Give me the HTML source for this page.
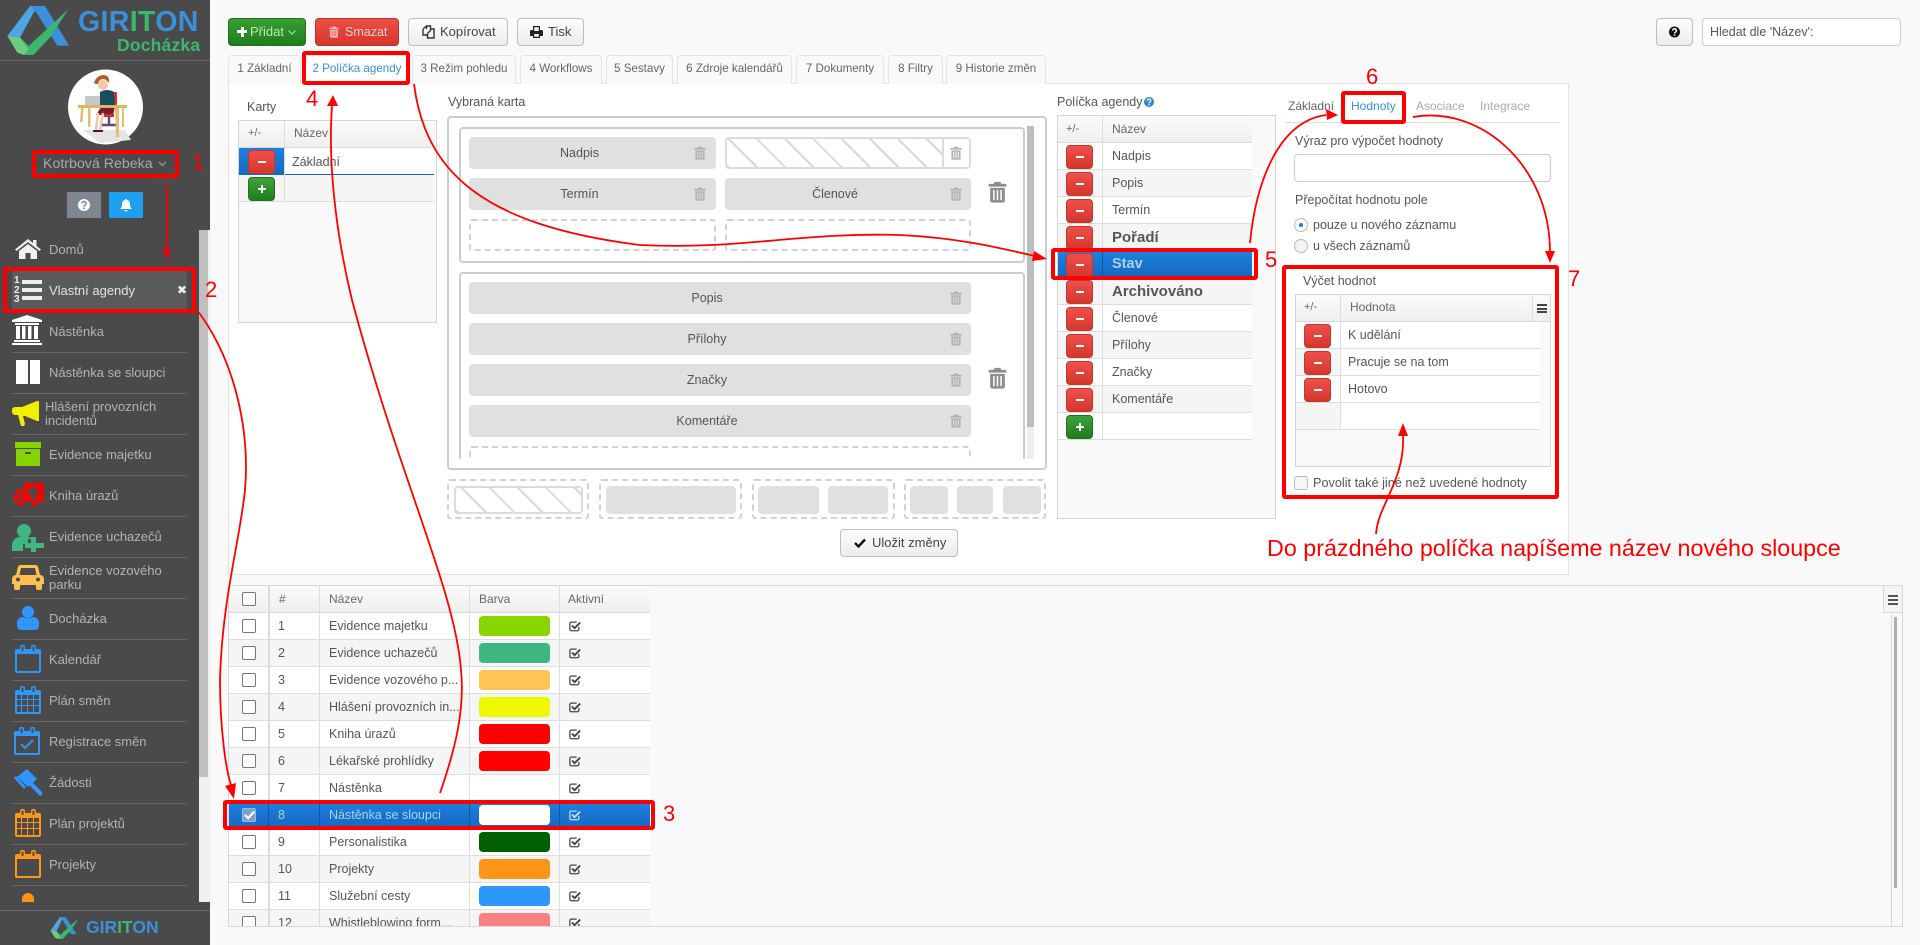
<!DOCTYPE html>
<html lang="cs"><head><meta charset="utf-8"><title>Giriton Docházka</title>
<style>
*{box-sizing:border-box}
html,body{margin:0;padding:0;width:1920px;height:945px;overflow:hidden;background:#f9f9f9;font-family:"Liberation Sans",sans-serif;font-size:12.5px;color:#555}
.a,.t,.btn,.tab,.f,.d,.rm,.pl,.s,.n,.rw{position:absolute}
.t{white-space:nowrap;line-height:16px}
.btn{height:28px;top:18px;border:1px solid #bdbdbd;border-radius:4px;background:linear-gradient(#fdfdfd,#ececec);line-height:26px;font-size:13px;color:#444;white-space:nowrap}
.tab{top:55px;height:29px;border:1px solid #e3e3e3;border-bottom:0;border-radius:4px 4px 0 0;background:#f9f9f9;font-size:11.6px;line-height:26px;text-align:center;color:#666;white-space:nowrap}
.f{background:#e0e0e0;border-radius:4px;text-align:center;line-height:32px;height:32px;color:#555;font-size:12.5px;padding-right:26px}
.d{border:2px dashed #d2d2d2;border-radius:3px}
.rm,.pl{width:27px;height:24px;border-radius:4px}
.rm{background:linear-gradient(#f0504a,#d5362c);border:1px solid #c0392f}
.rm:after{content:"";position:absolute;left:9px;top:10px;width:8px;height:2px;background:#fff}
.pl{background:linear-gradient(#3fa23c,#1f7d1c);border:1px solid #246f22}
.pl:after{content:"";position:absolute;left:9px;top:10px;width:8px;height:2px;background:#fff}
.pl:before{content:"";position:absolute;left:12px;top:7px;width:2px;height:8px;background:#fff}
.hatch{background:repeating-linear-gradient(45deg,#d8d8d8 0 2px,#fff 2px 20px);border:2px solid #dcdcdc;border-radius:4px}
.tr{position:absolute;width:12px;height:14px;fill:#b2b2b2}
.trb{position:absolute;width:19px;height:22px;fill:#8d8d8d}
.head{background:linear-gradient(#fbfbfb,#efefef);border-bottom:1px solid #d9d9d9}
.rw{height:27px;border-bottom:1px solid #ddd;font-size:12.5px;line-height:27px}
.n{color:#b3b3b3;font-size:13px;line-height:14px;white-space:nowrap;left:49px}
.s{left:12px;width:175px;height:1px;background:#666}
.lab{font-size:12.5px;color:#555}
.red{position:absolute;color:#f00;font-size:22px;line-height:24px;z-index:30}
.g{position:absolute;left:0;width:421px;height:27px;border-bottom:1px solid #ddd;line-height:26px;background:#fff;white-space:nowrap}
.g.e{background:#f5f5f5}
.g i{position:absolute;font-style:normal}
.g .cb{left:13px;top:6px;width:14px;height:14px;border:1.5px solid #777;border-radius:2px;background:#fff}
.g .c1{left:49px}
.g .c2{left:100px}
.g .chip{left:250px;top:3px;width:71px;height:20px;border-radius:4px}
.g .ck{left:340px;top:7px;width:12px;height:12px}
.v{position:absolute;top:0;width:1px;background:#ddd}
</style></head><body>
<svg width="0" height="0" style="position:absolute"><defs>
<symbol id="trash" viewBox="0 0 14 16"><path fill-rule="evenodd" d="M5 .5h4l1 1.5h3.5v2H.5V2H4zM1.6 5h10.8v9.3a1.5 1.5 0 0 1-1.5 1.5H3.100a1.500 1.500 0 0 1-1.500-1.500zM3.800 6.500v7.500h1.100V6.500zM6.450 6.500v7.500h1.100V6.500zM9.100 6.500v7.500h1.100V6.500z"/></symbol>
<symbol id="chk" viewBox="0 0 14 14"><path fill="none" stroke="currentColor" stroke-width="1.500" d="M11.500 8v3a1.500 1.500 0 0 1-1.500 1.500H2.500A1.500 1.500 0 0 1 1 11V4a1.500 1.500 0 0 1 1.500-1.500H9"/><path fill="none" stroke="currentColor" stroke-width="2.200" d="M3.500 6.500l3 3L13 3"/></symbol>
<symbol id="cal" viewBox="0 0 26 28"><path fill-rule="evenodd" d="M0 6a2 2 0 0 1 2-2h3V2a2.500 2.500 0 0 1 5 0v2h6V2a2.500 2.500 0 0 1 5 0v2h3a2 2 0 0 1 2 2v20a2 2 0 0 1-2 2H2a2 2 0 0 1-2-2zM2 9v17h22V9zM6.500 1.500V6h2V1.500zM17.500 1.500V6h2V1.500z"/></symbol>
<symbol id="calg" viewBox="0 0 26 28"><path fill-rule="evenodd" d="M0 6a2 2 0 0 1 2-2h3V2a2.500 2.500 0 0 1 5 0v2h6V2a2.500 2.500 0 0 1 5 0v2h3a2 2 0 0 1 2 2v20a2 2 0 0 1-2 2H2a2 2 0 0 1-2-2zM2 9v4h4V9zM7 9v4h5V9zM13 9v4h5V9zM19 9v4h5V9zM2 14v5h4v-5zM7 14v5h5v-5zM13 14v5h5v-5zM19 14v5h5v-5zM2 20v6h4v-6zM7 20v6h5v-6zM13 20v6h5v-6zM19 20v6h5v-6zM6.500 1.500V6h2V1.500zM17.500 1.500V6h2V1.500z"/></symbol>
</defs></svg>

<!-- SIDEBAR -->
<div class="a" style="left:0;top:0;width:210px;height:230px;background:#4a4a4a"></div>
<div class="a" style="left:0;top:230px;width:199px;height:672px;background:#4a4a4a"></div>
<div class="a" style="left:199px;top:230px;width:11px;height:672px;background:#f0f0f0"></div>
<div class="a" style="left:199px;top:230px;width:9px;height:547px;background:#c0c0c0"></div>
<div class="a" style="left:0;top:60px;width:210px;height:1px;background:#666"></div>

<svg class="a" style="left:0;top:0" width="210" height="60" viewBox="0 0 630 180">
<polygon points="22,108 90,18 112,18 60,112" fill="#4fa6e6"/>
<polygon points="90,18 135,18 207,137 172,137 112,42" fill="#3c90da"/>
<polygon points="22,108 60,112 88,150 72,165 52,158" fill="#6ecb7f"/>
<polygon points="60,112 86,138 205,28 150,112 100,165 72,165 86,150" fill="#3cb86e"/>
</svg>
<div class="t" style="left:78px;top:9px;font-size:28.500px;line-height:26px;font-weight:bold;letter-spacing:.35px;color:#3c90da">GIR<span style="color:#3cb86e">IT</span>ON</div>
<div class="t" style="left:117px;top:35px;font-size:17.500px;line-height:20px;font-weight:bold;letter-spacing:.2px;color:#3cb86e">Docházka</div>

<svg class="a" style="left:68px;top:69px" width="76" height="76" viewBox="68 69 76 76">
<circle cx="105.500" cy="107" r="37.500" fill="#fff"/>
<polygon points="83,130 125,130 131,140 100,143" fill="#e4e4e4"/>
<rect x="113" y="92" width="4" height="13" rx="1" fill="#d93030"/>
<path d="M101 107h14l-2 8H96z" fill="#7c1a2c"/>
<path d="M98 113l-2 17M103 113l-3 17" stroke="#f0c8a8" stroke-width="2.500" fill="none"/>
<path d="M93 130h5v2h-5zM98 130h5v2h-5z" fill="#5a1420"/>
<path d="M109 114v11M102 125h14" stroke="#5c4a78" stroke-width="2.500" fill="none"/>
<path d="M104 114h10v3h-10z" fill="#c03038"/>
<path d="M100 92q7-4 14 0l1 14h-15z" fill="#17505a"/>
<rect x="85" y="96" width="15" height="10" rx="1" fill="#c6c8ca"/>
<circle cx="103" cy="85" r="5" fill="#f2c8a8"/>
<path d="M94 83q2-7 9-8q7 0 6 8q-3-4-6-4q-4 0-5 5q-3 0-4-1z" fill="#b85a24"/>
<rect x="78" y="105" width="49" height="3" fill="#dfb565"/>
<path d="M81 108l-1 14h2.500l1-14zM88 108v19h2.500v-19zM115 108l1 29h3v-29zM122 108v19h2v-19z" fill="#e6bf6e"/>
</svg>

<div class="t" style="left:43px;top:156px;font-size:14.200px;color:#a9a9a9">Kotrbová Rebeka</div>
<svg class="a" style="left:158px;top:161px" width="9" height="6" viewBox="0 0 9 6"><path d="M1 1l3.500 3.500L8 1" fill="none" stroke="#8f8f8f" stroke-width="1.500"/></svg>

<div class="a" style="left:67px;top:192px;width:34px;height:26px;background:#7e8791"></div>
<div class="a" style="left:109px;top:192px;width:34px;height:26px;background:#1da1ee"></div>
<svg class="a" style="left:78px;top:199px" width="12" height="12" viewBox="0 0 12 12"><circle cx="6" cy="6" r="6" fill="#fff"/><path d="M4 4.500a2 2 0 1 1 3 1.700c-.8.500-1 .800-1 1.500" fill="none" stroke="#7e8791" stroke-width="1.500"/><rect x="5.200" y="8.500" width="1.600" height="1.600" fill="#7e8791"/></svg>
<svg class="a" style="left:120px;top:199px" width="12" height="13" viewBox="0 0 12 13"><path d="M6 0a1 1 0 0 1 1 1c2 .4 3 2 3 4 0 3 1 4 2 5H0c1-1 2-2 2-5 0-2 1-3.600 3-4a1 1 0 0 1 1-1zM4.500 11h3a1.500 1.500 0 0 1-3 0z" fill="#fff"/></svg>

<!-- menu icons -->
<svg class="a" style="left:15px;top:239px" width="26" height="20" viewBox="0 0 26 20"><path d="M13 0l5 4V1h3.500v6L26 10.500 24.500 12 13 3 1.500 12 0 10.500zM4 12l9-7 9 7v8h-6.500v-6h-5v6H4z" fill="#f0f0f0"/></svg>
<div class="n" style="top:243px">Domů</div>
<div class="a" style="left:12px;top:271px;width:175px;height:40px;background:#5a5a5a"></div>
<div class="t" style="left:14px;top:276px;font-size:10px;line-height:9.500px;font-weight:bold;color:#eee;white-space:normal;width:8px">1<br>2<br>3</div>
<div class="a" style="left:22px;top:280px;width:20px;height:4px;background:#eee"></div>
<div class="a" style="left:22px;top:288px;width:20px;height:4px;background:#eee"></div>
<div class="a" style="left:22px;top:296px;width:20px;height:4px;background:#eee"></div>
<div class="n" style="top:284px;color:#e2e2e2">Vlastní agendy</div>
<div class="t" style="left:177px;top:282px;font-size:12px;color:#eee;font-family:'DejaVu Sans',sans-serif">✖</div>

<svg class="a" style="left:12px;top:315px" width="30" height="30" viewBox="0 0 30 30" fill="#fff"><path d="M15 0l15 5v2H0V5zM3 8h24v2H3zM4 11h4v13H4zM10 11h3.500v13H10zM16 11h3.500v13H16zM22 11h4v13h-4zM2 25h26v2H2zM0 28h30v2H0z"/></svg>
<div class="n" style="top:325px">Nástěnka</div><div class="s" style="top:352px"></div>

<div class="a" style="left:16px;top:360px;width:12px;height:24px;background:#fff"></div>
<div class="a" style="left:30px;top:360px;width:10px;height:24px;background:#fff"></div>
<div class="n" style="top:366px">Nástěnka se sloupci</div><div class="s" style="top:393px"></div>

<svg class="a" style="left:12px;top:401px" width="27" height="25" viewBox="0 0 27 25" fill="#f0f000"><path d="M0 9a3 3 0 0 1 3-3h7L25 0h2v20h-2L13 15l-2 0 2 8-1 2H9L6 14H3a3 3 0 0 1-3-3z"/></svg>
<div class="n" style="top:400px;left:45px">Hlášení provozních<br>incidentů</div><div class="s" style="top:434px"></div>

<div class="a" style="left:15px;top:442px;width:26px;height:6px;background:#86d300"></div>
<div class="a" style="left:16px;top:449px;width:24px;height:17px;background:#86d300"></div>
<div class="a" style="left:25px;top:452px;width:6px;height:1.500px;background:#3c5a00"></div>
<div class="n" style="top:448px">Evidence majetku</div><div class="s" style="top:475px"></div>

<svg class="a" style="left:14px;top:483px" width="30" height="24" viewBox="0 0 30 24" fill="#f00"><path fill-rule="evenodd" d="M10 0h19a1 1 0 0 1 1 1v18h-5a4 4 0 0 0-8 0H10a4 4 0 0 0-8 0H0v-7l4-6h6zM17 3v4h-4v4h4v4h4v-4h4V7h-4V3zM6 8l-3 4h5V8z"/><circle cx="6" cy="20" r="3"/><circle cx="21" cy="20" r="3"/></svg>
<div class="n" style="top:489px">Kniha úrazů</div><div class="s" style="top:516px"></div>

<svg class="a" style="left:12px;top:524px" width="32" height="28" viewBox="0 0 32 28"><circle cx="12" cy="7" r="7" fill="#3eb780"/><path d="M0 27v-6a8 8 0 0 1 8-8h8a8 8 0 0 1 5 2h-5v5h-5v7z" fill="#3eb780"/><path d="M19 13h5v6h8v5h-8v4h-5v-4h-6v-5h6z" fill="#3eb780"/></svg>
<div class="n" style="top:530px">Evidence uchazečů</div><div class="s" style="top:557px"></div>

<svg class="a" style="left:12px;top:565px" width="32" height="25" viewBox="0 0 32 25" fill="#ffc050"><path fill-rule="evenodd" d="M9 0h14a3 3 0 0 1 3 2l2 8a4 4 0 0 1 4 4v5h-2v4a2 2 0 0 1-2 2h-2a2 2 0 0 1-2-2v-3H8v3a2 2 0 0 1-2 2H4a2 2 0 0 1-2-2v-4H0v-5a4 4 0 0 1 4-4l2-8a3 3 0 0 1 3-2zM9 3l-1.500 7h17L23 3zM6 12.500a2 2 0 1 0 .01 0zM26 12.500a2 2 0 1 0 .01 0z"/></svg>
<div class="n" style="top:564px">Evidence vozového<br>parku</div><div class="s" style="top:598px"></div>

<svg class="a" style="left:17px;top:606px" width="22" height="24" viewBox="0 0 22 24" fill="#2f96fb"><circle cx="11" cy="6" r="6"/><path d="M0 20v-3a6 6 0 0 1 6-6q5 3 10 0a6 6 0 0 1 6 6v3a4 4 0 0 1-4 4H4a4 4 0 0 1-4-4z"/></svg>
<div class="n" style="top:612px">Docházka</div><div class="s" style="top:639px"></div>

<svg class="a" style="left:15px;top:645px;fill:#2f96fb" width="26" height="28"><use href="#cal"/></svg>
<div class="n" style="top:653px">Kalendář</div><div class="s" style="top:680px"></div>

<svg class="a" style="left:15px;top:686px;fill:#2f96fb" width="26" height="28"><use href="#calg"/></svg>
<div class="n" style="top:694px">Plán směn</div><div class="s" style="top:721px"></div>

<svg class="a" style="left:14px;top:727px;fill:#2f96fb" width="26" height="28"><use href="#cal"/><path d="M7 17l4 4 8-8" fill="none" stroke="#2f96fb" stroke-width="2"/></svg>
<div class="n" style="top:735px">Registrace směn</div><div class="s" style="top:762px"></div>

<svg class="a" style="left:14px;top:769px" width="28" height="27" viewBox="0 0 28 27" fill="#2f96fb"><path d="M13 0l10 10-9 8L3 8zM0 9l2-2 10 11-2 2zM15 16l3-3 10 10a2 2 0 0 1-3 3z"/></svg>
<div class="n" style="top:776px">Žádosti</div><div class="s" style="top:803px"></div>

<svg class="a" style="left:15px;top:809px;fill:#ff9518" width="26" height="28"><use href="#calg"/></svg>
<div class="n" style="top:817px">Plán projektů</div><div class="s" style="top:844px"></div>

<svg class="a" style="left:15px;top:850px;fill:#ff9518" width="26" height="28"><use href="#cal"/></svg>
<div class="n" style="top:858px">Projekty</div><div class="s" style="top:885px"></div>
<div class="a" style="left:22px;top:893px;width:12px;height:9px;background:#ff9518;border-radius:6px 6px 0 0"></div>

<div class="a" style="left:0;top:902px;width:210px;height:43px;background:#4a4a4a"></div>
<div class="a" style="left:0;top:910px;width:210px;height:1px;background:#666"></div>
<svg class="a" style="left:50px;top:916px" width="30" height="23" viewBox="0 0 190 150">
<polygon points="0,95 62,8 82,8 40,100" fill="#4fa6e6"/>
<polygon points="62,8 100,8 170,118 135,118 82,30" fill="#3c90da"/>
<polygon points="0,95 40,100 65,135 50,150 30,142" fill="#6ecb7f"/>
<polygon points="40,100 65,122 185,15 130,98 80,150 50,150 65,135" fill="#3cb86e"/>
</svg>
<div class="t" style="left:86px;top:918px;font-size:17.500px;line-height:18px;font-weight:bold;color:#3c90da">GIR<span style="color:#3cb86e">IT</span>ON</div>

<!-- TOOLBAR -->
<div class="btn" style="left:228px;width:78px;background:linear-gradient(#36a033,#1f7d1c);border-color:#246f22;color:#bfe6b0;padding-left:21px">Přidat</div>
<div class="a" style="left:237px;top:30px;width:10px;height:3px;background:#fff"></div><div class="a" style="left:240.500px;top:26.500px;width:3px;height:10px;background:#fff"></div>
<svg class="a" style="left:288px;top:30px" width="8" height="5" viewBox="0 0 8 5"><path d="M.5.500L4 4 7.500.5" fill="none" stroke="#a8d8a0" stroke-width="1.200"/></svg>
<div class="btn" style="left:315px;width:84px;background:linear-gradient(#ee4f45,#d5362c);border-color:#b8332b;color:#fbd0c8;padding-left:29px;font-size:12.500px">Smazat</div>
<svg class="a" style="left:329px;top:26px;fill:#fbc5be" width="10" height="12"><use href="#trash"/></svg>
<div class="btn" style="left:408px;width:100px;padding-left:31px">Kopírovat</div>
<svg class="a" style="left:422px;top:25px" width="13" height="14" viewBox="0 0 13 14"><path d="M4.500 4V1h4l0 3H12v9H5.500V8.500M1 4l3.500-3M1 4v6h4.500M5.500 8.500L9 5" fill="none" stroke="#333" stroke-width="1.400"/></svg>
<div class="btn" style="left:517px;width:67px;padding-left:30px">Tisk</div>
<svg class="a" style="left:530px;top:26px" width="13" height="12" viewBox="0 0 13 12" fill="#222"><path fill-rule="evenodd" d="M3 0h7v4h1.500A1.500 1.500 0 0 1 13 5.500V10h-3v2H3v-2H0V5.500A1.500 1.500 0 0 1 1.500 4H3zM4.200 1.200V5h4.600V1.200zM4.200 8v2.800h4.600V8z"/></svg>
<div class="btn" style="left:1656px;width:37px"></div>
<svg class="a" style="left:1669px;top:26px" width="11" height="12" viewBox="0 0 12 12"><circle cx="6" cy="6" r="6" fill="#111"/><path d="M4 4.500a2 2 0 1 1 3 1.700c-.8.500-1 .800-1 1.500" fill="none" stroke="#fff" stroke-width="1.500"/><rect x="5.200" y="8.500" width="1.600" height="1.600" fill="#fff"/></svg>
<div class="a" style="left:1702px;top:18px;width:199px;height:28px;background:#fff;border:1px solid #ccc;border-radius:4px;font-size:12.500px;line-height:26px;padding-left:7px;color:#555">Hledat dle 'Název':</div>

<!-- TABS -->
<div class="a" style="left:228px;top:83px;width:1341px;height:492px;background:#fff;border:1px solid #e3e3e3"></div>
<div class="tab" style="left:228px;width:73px">1 Základní</div>
<div class="tab" style="left:305px;width:104px;background:#fff;color:#3b8ee0">2 Políčka agendy</div>
<div class="tab" style="left:412px;width:104px">3 Režim pohledu</div>
<div class="tab" style="left:520px;width:82px">4 Workflows</div>
<div class="tab" style="left:606px;width:67px">5 Sestavy</div>
<div class="tab" style="left:677px;width:115px">6 Zdroje kalendářů</div>
<div class="tab" style="left:796px;width:88px">7 Dokumenty</div>
<div class="tab" style="left:888px;width:55px">8 Filtry</div>
<div class="tab" style="left:946px;width:100px">9 Historie změn</div>

<!-- KARTY -->
<div class="t lab" style="left:247px;top:99px">Karty</div>
<div class="a" style="left:238px;top:120px;width:199px;height:203px;background:#f9f9f9;border:1px solid #d5d5d5"></div>
<div class="a head" style="left:239px;top:121px;width:195px;height:27px"></div>
<div class="a" style="left:284px;top:121px;width:1px;height:80px;background:#ddd"></div>
<div class="t" style="left:248px;top:125px;font-size:11px;color:#666">+/-</div>
<div class="t" style="left:294px;top:125px;font-size:12px;color:#666">Název</div>
<div class="a" style="left:239px;top:148px;width:45px;height:27px;background:linear-gradient(#1d82e0,#1566bf)"></div>
<div class="a" style="left:285px;top:148px;width:149px;height:27px;background:#fff;border-bottom:1.500px solid #1566bf"></div>
<div class="t" style="left:292px;top:154px">Základní</div>
<div class="rm" style="left:248px;top:150px"></div>
<div class="a" style="left:239px;top:175px;width:195px;height:27px;background:#f5f5f5;border-bottom:1px solid #ddd"></div>
<div class="a" style="left:284px;top:175px;width:1px;height:27px;background:#ddd"></div>
<div class="pl" style="left:248px;top:177px"></div>

<!-- VYBRANA KARTA -->
<div class="t lab" style="left:448px;top:94px">Vybraná karta</div>
<div class="a" style="left:447px;top:116px;width:600px;height:354px;border:2px solid #ccc;border-radius:4px"></div>
<div class="a" style="left:459px;top:127px;width:566px;height:136px;border:2px solid #ccc;border-radius:4px"></div>
<div class="a" style="left:1027px;top:126px;width:7px;height:333px;background:#eee"></div>
<div class="a" style="left:1027px;top:126px;width:7px;height:301px;background:#bdbdbd"></div>
<div class="f" style="left:469px;top:137px;width:247px">Nadpis</div>
<svg class="tr" style="left:694px;top:146px"><use href="#trash"/></svg>
<div class="a hatch" style="left:725px;top:137px;width:246px;height:32px"></div>
<div class="a" style="left:942px;top:139px;width:27px;height:28px;background:#fff;border-left:2px solid #dcdcdc"></div>
<svg class="tr" style="left:950px;top:146px"><use href="#trash"/></svg>
<div class="f" style="left:469px;top:178px;width:247px">Termín</div>
<svg class="tr" style="left:694px;top:187px"><use href="#trash"/></svg>
<div class="f" style="left:725px;top:178px;width:246px">Členové</div>
<svg class="tr" style="left:950px;top:187px"><use href="#trash"/></svg>
<svg class="trb" style="left:988px;top:181px"><use href="#trash"/></svg>
<div class="d" style="left:469px;top:219px;width:247px;height:32px"></div>
<div class="d" style="left:725px;top:219px;width:246px;height:32px"></div>

<div class="a" style="left:459px;top:272px;width:566px;height:187px;border:2px solid #ccc;border-bottom:0;border-radius:4px 4px 0 0;overflow:hidden"></div>
<div class="f" style="left:469px;top:282px;width:502px">Popis</div>
<div class="f" style="left:469px;top:323px;width:502px">Přílohy</div>
<div class="f" style="left:469px;top:364px;width:502px">Značky</div>
<div class="f" style="left:469px;top:405px;width:502px">Komentáře</div>
<svg class="tr" style="left:950px;top:291px"><use href="#trash"/></svg>
<svg class="tr" style="left:950px;top:332px"><use href="#trash"/></svg>
<svg class="tr" style="left:950px;top:373px"><use href="#trash"/></svg>
<svg class="tr" style="left:950px;top:414px"><use href="#trash"/></svg>
<svg class="trb" style="left:988px;top:367px"><use href="#trash"/></svg>
<div class="a" style="left:469px;top:446px;width:502px;height:13px;border:2px dashed #d2d2d2;border-bottom:0;border-radius:3px 3px 0 0"></div>

<div class="d" style="left:447px;top:479px;width:142px;height:40px"></div>
<div class="d" style="left:599px;top:479px;width:143px;height:40px"></div>
<div class="d" style="left:752px;top:479px;width:143px;height:40px"></div>
<div class="d" style="left:904px;top:479px;width:142px;height:40px"></div>
<div class="a hatch" style="left:454px;top:486px;width:129px;height:28px"></div>
<div class="f" style="left:606px;top:486px;width:130px;height:28px"></div>
<div class="f" style="left:758px;top:486px;width:61px;height:28px"></div>
<div class="f" style="left:828px;top:486px;width:60px;height:28px"></div>
<div class="f" style="left:910px;top:486px;width:38px;height:28px"></div>
<div class="f" style="left:957px;top:486px;width:36px;height:28px"></div>
<div class="f" style="left:1003px;top:486px;width:38px;height:28px"></div>

<div class="btn" style="left:840px;top:529px;width:118px;padding-left:31px">Uložit změny</div>
<svg class="a" style="left:854px;top:538px" width="12" height="10" viewBox="0 0 12 10"><path d="M1 5l3.500 3.500L11 1.500" fill="none" stroke="#111" stroke-width="2.400"/></svg>

<!-- POLICKA -->
<div class="t lab" style="left:1057px;top:94px">Políčka agendy</div>
<svg class="a" style="left:1144px;top:97px" width="10" height="10" viewBox="0 0 12 12"><circle cx="6" cy="6" r="6" fill="#2a85d8"/><path d="M4 4.500a2 2 0 1 1 3 1.700c-.8.500-1 .800-1 1.500" fill="none" stroke="#fff" stroke-width="1.500"/><rect x="5.200" y="8.500" width="1.600" height="1.600" fill="#fff"/></svg>
<div class="a" style="left:1057px;top:115px;width:219px;height:404px;background:#f9f9f9;border:1px solid #d5d5d5"></div>
<div class="a head" style="left:1058px;top:116px;width:194px;height:27px"></div>
<div class="t" style="left:1066px;top:121px;font-size:11px;color:#666">+/-</div>
<div class="t" style="left:1112px;top:121px;font-size:12px;color:#666">Název</div>

<div class="rw" style="left:1058px;top:143px;width:194px;background:#fff;padding-left:54px">Nadpis</div>
<div class="rw" style="left:1058px;top:170px;width:194px;background:#f5f5f5;padding-left:54px">Popis</div>
<div class="rw" style="left:1058px;top:197px;width:194px;background:#fff;padding-left:54px">Termín</div>
<div class="rw" style="left:1058px;top:224px;width:194px;background:#f5f5f5;padding-left:54px;font-size:15px;font-weight:bold">Pořadí</div>
<div class="rw" style="left:1058px;top:278px;width:194px;background:#f5f5f5;padding-left:54px;font-size:15px;font-weight:bold">Archivováno</div>
<div class="rw" style="left:1058px;top:305px;width:194px;background:#fff;padding-left:54px">Členové</div>
<div class="rw" style="left:1058px;top:332px;width:194px;background:#f5f5f5;padding-left:54px">Přílohy</div>
<div class="rw" style="left:1058px;top:359px;width:194px;background:#fff;padding-left:54px">Značky</div>
<div class="rw" style="left:1058px;top:386px;width:194px;background:#f5f5f5;padding-left:54px">Komentáře</div>
<div class="rw" style="left:1058px;top:413px;width:194px;background:#fff"></div>
<div class="a" style="left:1102px;top:116px;width:1px;height:324px;background:#ddd"></div>
<div class="rw" style="left:1058px;top:251px;width:194px;background:linear-gradient(#1d82e0,#1566bf);padding-left:54px;font-size:14.500px;font-weight:bold;color:#a9d3ef;border:0">Stav</div>
<div class="a" style="left:1102px;top:251px;width:1px;height:27px;background:#12569f"></div>
<div class="rm" style="left:1066px;top:145px"></div>
<div class="rm" style="left:1066px;top:172px"></div>
<div class="rm" style="left:1066px;top:199px"></div>
<div class="rm" style="left:1066px;top:226px"></div>
<div class="rm" style="left:1066px;top:253px"></div>
<div class="rm" style="left:1066px;top:280px"></div>
<div class="rm" style="left:1066px;top:307px"></div>
<div class="rm" style="left:1066px;top:334px"></div>
<div class="rm" style="left:1066px;top:361px"></div>
<div class="rm" style="left:1066px;top:388px"></div>
<div class="pl" style="left:1066px;top:415px"></div>

<!-- RIGHT -->
<div class="t" style="left:1288px;top:98px;font-size:12px;color:#666">Základní</div>
<div class="t" style="left:1351px;top:98px;font-size:12px;color:#3b8ee0">Hodnoty</div>
<div class="t" style="left:1416px;top:98px;font-size:12px;color:#aaa">Asociace</div>
<div class="t" style="left:1480px;top:98px;font-size:12px;color:#aaa">Integrace</div>
<div class="a" style="left:1285px;top:122px;width:275px;height:1px;background:#ddd"></div>
<div class="t lab" style="left:1295px;top:133px">Výraz pro výpočet hodnoty</div>
<div class="a" style="left:1294px;top:154px;width:257px;height:28px;border:1px solid #ccc;border-radius:4px;background:#fff"></div>
<div class="t lab" style="left:1295px;top:192px">Přepočítat hodnotu pole</div>
<div class="a" style="left:1294px;top:218px;width:14px;height:14px;border:1px solid #bbb;border-radius:50%;background:#fbfbfb"></div>
<div class="a" style="left:1299px;top:223px;width:4px;height:4px;border-radius:50%;background:#1f78d8"></div>
<div class="t lab" style="left:1313px;top:217px">pouze u nového záznamu</div>
<div class="a" style="left:1294px;top:239px;width:14px;height:14px;border:1px solid #bbb;border-radius:50%;background:#f4f4f4"></div>
<div class="t lab" style="left:1313px;top:238px">u všech záznamů</div>

<div class="t lab" style="left:1303px;top:273px">Výčet hodnot</div>
<div class="a" style="left:1295px;top:294px;width:256px;height:173px;background:#f9f9f9;border:1px solid #d5d5d5"></div>
<div class="a head" style="left:1296px;top:295px;width:254px;height:27px"></div>
<div class="a" style="left:1532px;top:295px;width:1px;height:27px;background:#ddd"></div>
<div class="a" style="left:1537px;top:304px;width:10px;height:2px;background:#444"></div>
<div class="a" style="left:1537px;top:307.500px;width:10px;height:2px;background:#444"></div>
<div class="a" style="left:1537px;top:311px;width:10px;height:2px;background:#444"></div>
<div class="t" style="left:1304px;top:299px;font-size:11px;color:#666">+/-</div>
<div class="t" style="left:1350px;top:299px;font-size:12px;color:#666">Hodnota</div>
<div class="rw" style="left:1296px;top:322px;width:244px;background:#fff;padding-left:52px">K udělání</div>
<div class="rw" style="left:1296px;top:349px;width:244px;background:#fff;padding-left:52px">Pracuje se na tom</div>
<div class="rw" style="left:1296px;top:376px;width:244px;background:#fff;padding-left:52px">Hotovo</div>
<div class="rw" style="left:1296px;top:403px;width:244px;background:#fff"></div>
<div class="a" style="left:1296px;top:349px;width:44px;height:26px;background:#f5f5f5"></div>
<div class="a" style="left:1296px;top:403px;width:44px;height:26px;background:#f5f5f5"></div>
<div class="a" style="left:1340px;top:295px;width:1px;height:134px;background:#ddd"></div>
<div class="rm" style="left:1304px;top:324px"></div>
<div class="rm" style="left:1304px;top:351px"></div>
<div class="rm" style="left:1304px;top:378px"></div>
<div class="a" style="left:1294px;top:476px;width:14px;height:14px;border:1px solid #bbb;border-radius:3px;background:#f7f7f7"></div>
<div class="t lab" style="left:1313px;top:475px;font-size:12.700px">Povolit také jiné než uvedené hodnoty</div>

<!-- GRID -->
<div class="a" style="left:228px;top:585px;width:1675px;height:342px;border:1px solid #d8d8d8;overflow:hidden">
 <div class="a" style="left:0;top:0;width:421px;height:27px;background:linear-gradient(#fbfbfb,#efefef);border-bottom:1px solid #d9d9d9"></div>
 <div class="a" style="left:13px;top:6px;width:14px;height:14px;border:1.500px solid #777;border-radius:2px;background:#fff"></div>
 <div class="t" style="left:50px;top:5px;font-size:12px;color:#666">#</div>
 <div class="t" style="left:100px;top:5px;font-size:12px;color:#666">Název</div>
 <div class="t" style="left:250px;top:5px;font-size:12px;color:#666">Barva</div>
 <div class="t" style="left:339px;top:5px;font-size:12px;color:#666">Aktivní</div>

 <div class="g" style="top:27px"><i class="cb"></i><i class="c1">1</i><i class="c2">Evidence majetku</i><i class="chip" style="background:#88d600"></i><svg class="a ck" style="color:#444" width="12" height="12"><use href="#chk"/></svg></div>
 <div class="g e" style="top:54px"><i class="cb"></i><i class="c1">2</i><i class="c2">Evidence uchazečů</i><i class="chip" style="background:#3eb780"></i><svg class="a ck" style="color:#444" width="12" height="12"><use href="#chk"/></svg></div>
 <div class="g" style="top:81px"><i class="cb"></i><i class="c1">3</i><i class="c2">Evidence vozového p...</i><i class="chip" style="background:#ffc455"></i><svg class="a ck" style="color:#444" width="12" height="12"><use href="#chk"/></svg></div>
 <div class="g e" style="top:108px"><i class="cb"></i><i class="c1">4</i><i class="c2">Hlášení provozních in...</i><i class="chip" style="background:#eef800"></i><svg class="a ck" style="color:#444" width="12" height="12"><use href="#chk"/></svg></div>
 <div class="g" style="top:135px"><i class="cb"></i><i class="c1">5</i><i class="c2">Kniha úrazů</i><i class="chip" style="background:#f00"></i><svg class="a ck" style="color:#444" width="12" height="12"><use href="#chk"/></svg></div>
 <div class="g e" style="top:162px"><i class="cb"></i><i class="c1">6</i><i class="c2">Lékařské prohlídky</i><i class="chip" style="background:#f00"></i><svg class="a ck" style="color:#444" width="12" height="12"><use href="#chk"/></svg></div>
 <div class="g" style="top:189px"><i class="cb"></i><i class="c1">7</i><i class="c2">Nástěnka</i><svg class="a ck" style="color:#444" width="12" height="12"><use href="#chk"/></svg></div>
 <div class="g" style="top:243px"><i class="cb"></i><i class="c1">9</i><i class="c2">Personalistika</i><i class="chip" style="background:#005f00"></i><svg class="a ck" style="color:#444" width="12" height="12"><use href="#chk"/></svg></div>
 <div class="g e" style="top:270px"><i class="cb"></i><i class="c1">10</i><i class="c2">Projekty</i><i class="chip" style="background:#ff9518"></i><svg class="a ck" style="color:#444" width="12" height="12"><use href="#chk"/></svg></div>
 <div class="g" style="top:297px"><i class="cb"></i><i class="c1">11</i><i class="c2">Služební cesty</i><i class="chip" style="background:#2f96fb"></i><svg class="a ck" style="color:#444" width="12" height="12"><use href="#chk"/></svg></div>
 <div class="g e" style="top:324px"><i class="cb"></i><i class="c1">12</i><i class="c2">Whistleblowing form...</i><i class="chip" style="background:#f88080"></i><svg class="a ck" style="color:#444" width="12" height="12"><use href="#chk"/></svg></div>

 <div class="v" style="left:39px;height:340px;width:2px;background:#dcdcdc"></div>
 <div class="v" style="left:90px;height:340px"></div>
 <div class="v" style="left:240px;height:340px"></div>
 <div class="v" style="left:330px;height:340px"></div>

 <div class="g" style="top:216px;background:linear-gradient(#1d82e0,#1566bf);color:#a9d3ef;border:0"><i class="cb" style="background:#7b9fd0;border-color:#9db8dd"></i><svg class="a" style="left:15px;top:8px" width="11" height="10" viewBox="0 0 12 10"><path d="M1 5l3.500 3.500L11 1.500" fill="none" stroke="#fff" stroke-width="2.400"/></svg><i class="c1">8</i><i class="c2">Nástěnka se sloupci</i><i class="chip" style="background:#fff"></i><svg class="a ck" style="color:#bcdcf4" width="12" height="12"><use href="#chk"/></svg></div>
 <div class="v" style="left:39px;top:216px;height:27px;background:#12569f"></div>
 <div class="v" style="left:90px;top:216px;height:27px;background:#12569f"></div>
 <div class="v" style="left:240px;top:216px;height:27px;background:#12569f"></div>
 <div class="v" style="left:330px;top:216px;height:27px;background:#12569f"></div>

 <div class="a" style="left:1654px;top:0;width:20px;height:27px;background:#f4f4f4;border-left:1px solid #d8d8d8;border-bottom:1px solid #d8d8d8"></div>
 <div class="a" style="left:1659px;top:9px;width:10px;height:2px;background:#555"></div>
 <div class="a" style="left:1659px;top:13px;width:10px;height:2px;background:#555"></div>
 <div class="a" style="left:1659px;top:17px;width:10px;height:2px;background:#555"></div>
 <div class="a" style="left:1662px;top:27px;width:1px;height:314px;background:#d8d8d8"></div>
 <div class="a" style="left:1665px;top:31px;width:3px;height:271px;background:#adadad"></div>
</div>

<!-- ANNOTATIONS -->
<svg class="a" style="left:0;top:0;z-index:20" width="1920" height="945" viewBox="0 0 1920 945" fill="none" stroke="#f00">
<g stroke-width="4">
<rect x="34" y="152" width="143" height="24" rx="1"/>
<rect x="5" y="269" width="189" height="42" rx="1"/>
<rect x="225" y="802" width="428" height="26" rx="1"/>
<rect x="304" y="53" width="104" height="30" rx="1"/>
<rect x="1053" y="250" width="203" height="28" rx="1"/>
<rect x="1343" y="93" width="61" height="29" rx="1"/>
<rect x="1284" y="267" width="273" height="230" rx="1"/>
</g>
<g stroke-width="1.800">
<path d="M167 184V250"/>
<path d="M197 310C235 360 250 430 245 490C240 540 222 600 220 680C220 730 226 770 231 785"/>
<path d="M440 793C455 750 465 710 461 670C455 590 400 480 352 300C335 230 328 160 332 106"/>
<path d="M414 84C425 170 480 225 640 245C740 250 800 232 900 235C960 238 1000 248 1035 256"/>
<path d="M1250 243C1255 190 1275 122 1326 115"/>
<path d="M1413 117C1480 105 1550 165 1550 252"/>
<path d="M1376 534C1378 505 1405 480 1403 436"/>
</g>
<g fill="#f00" stroke="none">
<polygon points="167,260 163,249 171,249"/>
<polygon points="234,799 225,786 236,783"/>
<polygon points="333,95 327,106 338,106"/>
<polygon points="1047,259 1034,251 1032,261"/>
<polygon points="1338,115 1326,109 1327,120"/>
<polygon points="1550,263 1545,251 1555,251"/>
<polygon points="1403,423 1398,436 1408,436"/>
</g>
</svg>
<div class="red" style="left:192px;top:151px">1</div>
<div class="red" style="left:205px;top:278px">2</div>
<div class="red" style="left:663px;top:802px">3</div>
<div class="red" style="left:306px;top:87px">4</div>
<div class="red" style="left:1265px;top:248px">5</div>
<div class="red" style="left:1366px;top:65px">6</div>
<div class="red" style="left:1568px;top:267px">7</div>
<div class="red" style="left:1267px;top:536px;font-size:23.300px;white-space:nowrap">Do prázdného políčka napíšeme název nového sloupce</div>
</body></html>
